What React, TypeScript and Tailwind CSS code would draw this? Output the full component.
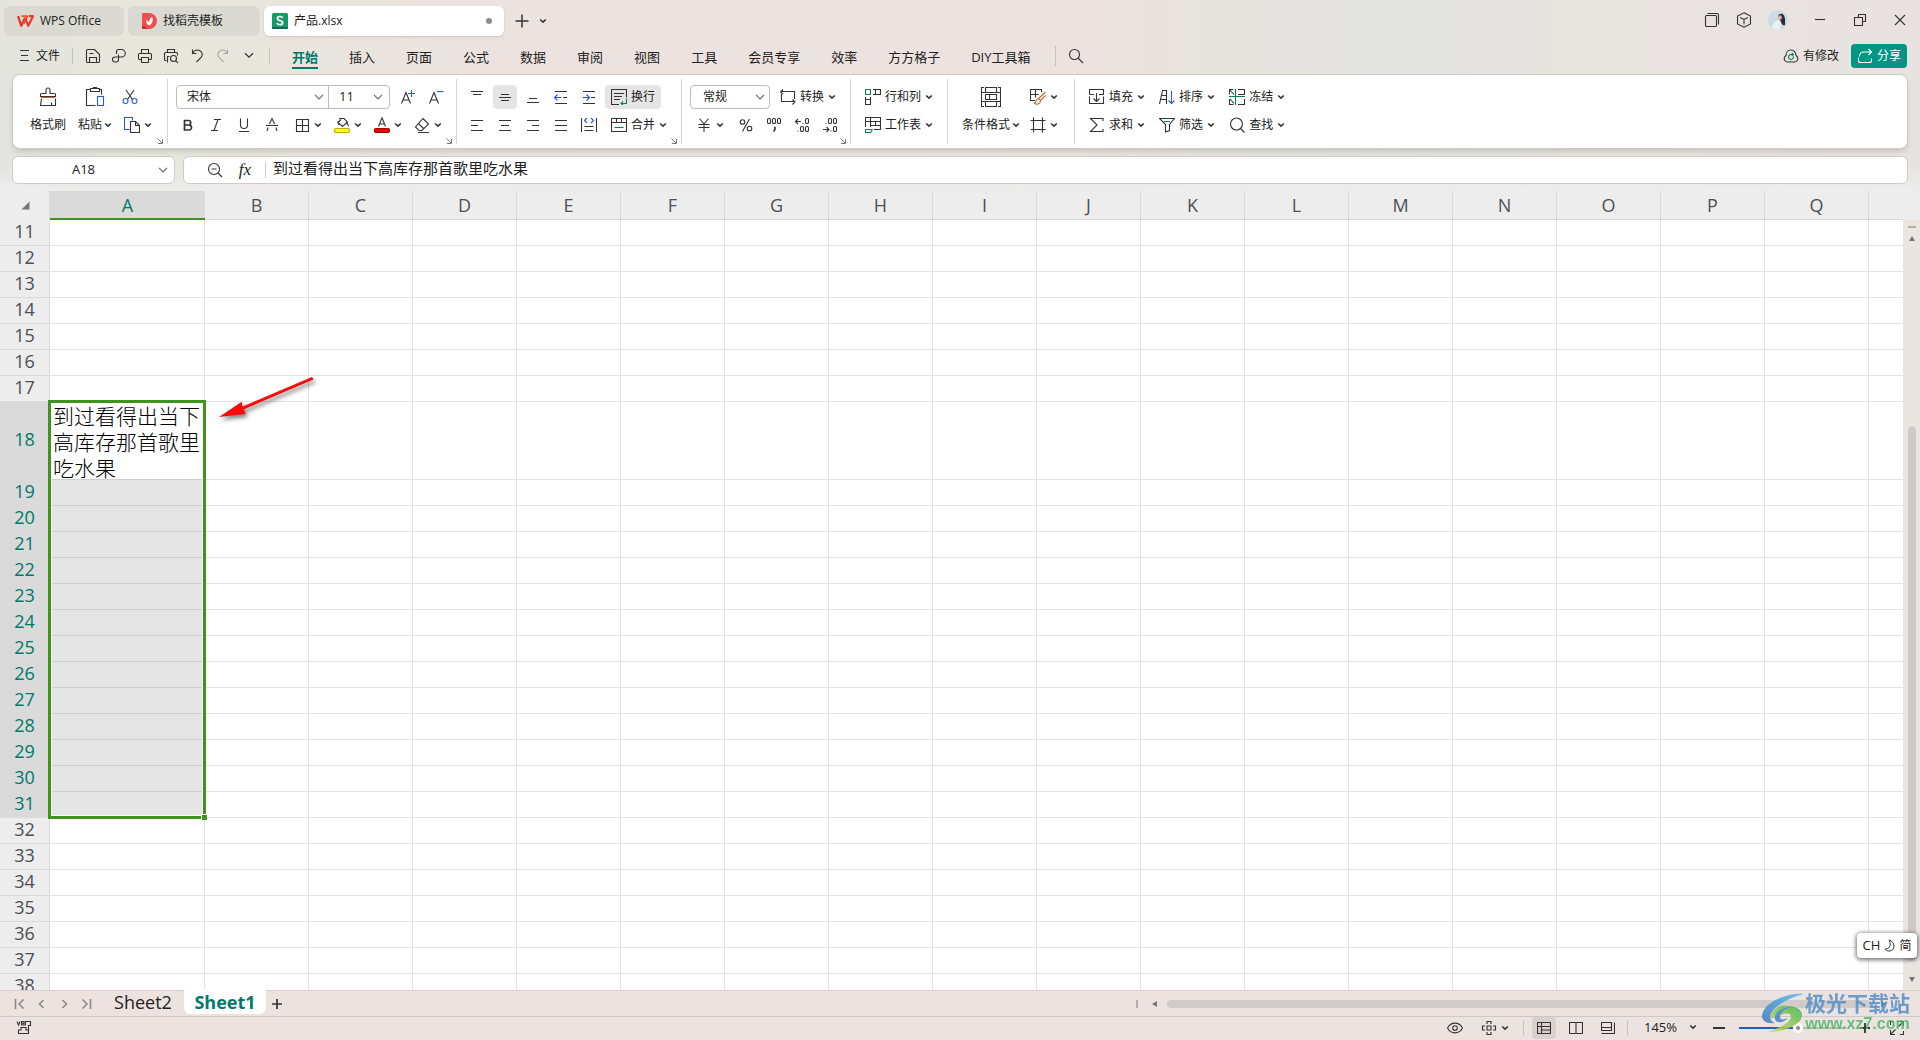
import type { ReactNode } from "react";

const INK = "#333333";
const BLUE = "#2b59d9";
const GREEN = "#0a8058";
const ORANGE = "#c8642c";

const MENUS = [
  "开始",
  "插入",
  "页面",
  "公式",
  "数据",
  "审阅",
  "视图",
  "工具",
  "会员专享",
  "效率",
  "方方格子",
  "DIY工具箱",
];

const COLUMNS = "ABCDEFGHIJKLMNOPQ".split("");
const ROWS = Array.from({ length: 28 }, (_, i) => i + 11);
const CELL_TEXT = "到过看得出当下高库存那首歌里吃水果";

type IconProps = { children: ReactNode; size?: number; className?: string };

function Icon({ children, size = 16, className = "" }: IconProps) {
  return (
    <svg
      width={size}
      height={size}
      viewBox={`0 0 ${size} ${size}`}
      fill="none"
      stroke={INK}
      strokeWidth="1.1"
      className={`shrink-0 ${className}`}
      aria-hidden="true"
    >
      {children}
    </svg>
  );
}

function Chevron() {
  return (
    <svg width="8" height="6" viewBox="0 0 8 6" fill="none" stroke={INK} strokeWidth="1.6" className="shrink-0" aria-hidden="true">
      <path d="M1.2 1.5 4 4.2 6.8 1.5" />
    </svg>
  );
}

function WideChevron({ className = "" }: { className?: string }) {
  return (
    <svg width="10" height="6" viewBox="0 0 10 6" fill="none" stroke="#6b6b6b" strokeWidth="1.2" className={`shrink-0 ${className}`} aria-hidden="true">
      <path d="M1 .8 5 4.8 9 .8" />
    </svg>
  );
}

type ToolProps = { name: string; children: ReactNode; active?: boolean };

function Tool({ name, children, active = false }: ToolProps) {
  return (
    <button
      type="button"
      aria-label={name}
      className={`flex h-6 w-6 items-center justify-center rounded ${active ? "bg-[#e5e5e5]" : ""}`}
    >
      {children}
    </button>
  );
}

function DropTool({ name, children }: ToolProps) {
  return (
    <button type="button" aria-label={name} className="flex h-6 w-9 items-center gap-1 pl-1.5">
      {children}
      <Chevron />
    </button>
  );
}

type LabelToolProps = { icon: ReactNode; label: string; drop?: boolean; active?: boolean };

function LabelTool({ icon, label, drop = true, active = false }: LabelToolProps) {
  return (
    <button
      type="button"
      className={`flex h-6 items-center gap-1 rounded px-1.5 whitespace-nowrap ${active ? "bg-[#e5e5e5]" : ""}`}
    >
      {icon}
      <span>{label}</span>
      {drop && <Chevron />}
    </button>
  );
}

function BigTool({ icon, label, drop = false }: LabelToolProps) {
  return (
    <button type="button" className="flex flex-col items-center gap-1 px-1.5 whitespace-nowrap">
      <span className="flex h-6 items-center">{icon}</span>
      <span className="flex h-6 items-center gap-0.5">
        {label}
        {drop && <Chevron />}
      </span>
    </button>
  );
}

type GroupProps = { children: ReactNode; launcher?: string; last?: boolean };

function Group({ children, launcher, last = false }: GroupProps) {
  return (
    <div className={`relative flex h-[65px] px-2 pt-1.5 ${last ? "" : "border-r border-[#d4d4d4]"}`}>
      {children}
      {launcher && (
        <button type="button" aria-label={launcher} className="absolute right-1 bottom-0">
          <svg width="6" height="6" viewBox="0 0 6 6" fill="none" stroke="#777" className="block">
            <path d="M.5 .5 5 5M5.5 1v4.5H1" />
          </svg>
        </button>
      )}
    </div>
  );
}

function QuickAccess() {
  return (
    <div className="flex items-center gap-2.5">
      <button type="button" aria-label="保存">
        <Icon>
          <path d="M1.5 2.5a1 1 0 0 1 1-1h7l5 5v7a1 1 0 0 1-1 1h-11a1 1 0 0 1-1-1zM4.500 14.500v-5h7v5M4.500 5.500h4" />
        </Icon>
      </button>
      <button type="button" aria-label="输出">
        <Icon>
          <path d="M5.500 6V3.500a2 2 0 0 1 2-2h3a3.500 3.500 0 0 1 0 7.500H4a2.500 2.500 0 0 0 0 5h1a2.500 2.500 0 0 0 2.500-2.500V6.500" />
        </Icon>
      </button>
      <button type="button" aria-label="打印">
        <Icon>
          <path d="M4.500 5.500v-4h7v4M4.500 11.500h-2a1 1 0 0 1-1-1v-4a1 1 0 0 1 1-1h11a1 1 0 0 1 1 1v4a1 1 0 0 1-1 1h-2M4.500 9.500h7v5h-7z" />
        </Icon>
      </button>
      <button type="button" aria-label="打印预览">
        <Icon>
          <path d="M4.500 4.500v-3h7v3M3.500 12.500h-1a1 1 0 0 1-1-1v-6a1 1 0 0 1 1-1h11a1 1 0 0 1 1 1v2M4.500 14.500v-6h2" />
          <circle cx="10.500" cy="10.500" r="3" />
          <path d="m12.700 12.700 2.500 2.500" />
        </Icon>
      </button>
      <button type="button" aria-label="撤销">
        <Icon>
          <path d="M3.500 1.500v4h4M3.500 5.500C5 2.500 8 1.500 10.500 2.500c3 1.500 3.500 4.500 1.500 7L7.500 14" />
        </Icon>
      </button>
      <button type="button" aria-label="恢复" className="opacity-35">
        <Icon>
          <path d="M12.500 1.500v4h-4M12.500 5.500C11 2.500 8 1.500 5.500 2.500c-3 1.500-3.500 4.500-1.500 7L8.500 14" />
        </Icon>
      </button>
      <button type="button" aria-label="更多" className="flex w-4 justify-center">
        <svg width="10" height="7" viewBox="0 0 10 7" fill="none" stroke={INK} strokeWidth="1.300">
          <path d="m1 1.200 4 4 4-4" />
        </svg>
      </button>
    </div>
  );
}

function TitleBar() {
  return (
    <header className="flex h-10 items-start pt-1.5 pl-1">
      <button type="button" className="flex h-[30px] w-30 items-center gap-1.5 rounded-md bg-[#dadad2] pl-[13px]">
        <svg width="17" height="12" viewBox="0 0 17 12" fill="none" strokeWidth="2.200" strokeLinejoin="round">
          <path d="M1 1.200 4.300 10.800 8 2.800" stroke="#e8332a" />
          <path d="M4.500 1.200h6L7 8.500" stroke="#f4511e" strokeWidth="1.800" />
          <path d="M8 3 11.300 10.800 16 1.200h-4" stroke="#ee3b2b" />
        </svg>
        WPS Office
      </button>
      <button type="button" className="ml-1 flex h-[30px] w-33 items-center gap-1.5 rounded-md bg-[#dadad2] pl-3.5">
        <svg width="15" height="16" viewBox="0 0 15 16">
          <path d="M0 1a1 1 0 0 1 1-1h6a8 8 0 0 1 0 16H1a1 1 0 0 1-1-1z" fill="#f04f50" />
          <path d="M0 13h3l2 3H1a1 1 0 0 1-1-1z" fill="#c62f39" />
          <path d="M7.200 12.500C4.800 11.500 4 9.500 4.200 7c1.600.5 2.600 1.500 3 3 0-2.500.5-4.500 2.800-6.500 1.400 3.500.6 7.500-2.800 9z" fill="#fff" />
        </svg>
        找稻壳模板
      </button>
      <div className="ml-1 flex h-[30px] w-60 items-center rounded-md bg-white px-2 shadow-sm">
        <svg width="16" height="16" viewBox="0 0 16 16" aria-hidden="true">
          <rect width="16" height="16" rx="1.500" fill="#149b67" />
          <path d="M0 14h16v.5a1.500 1.500 0 0 1-1.500 1.500h-13A1.500 1.500 0 0 1 0 14.500z" fill="#0b7049" />
          <path d="M10.700 5C10.200 3.900 9.200 3.500 8 3.500c-1.500 0-2.600.7-2.600 2C5.400 8.300 10.700 7 10.700 9.700c0 1.400-1.200 2-2.700 2s-2.600-.6-3-1.800" fill="none" stroke="#fff" strokeWidth="1.700" />
        </svg>
        <span className="ml-1.5">产品.xlsx</span>
        <span className="ml-auto mr-1 h-1.5 w-1.5 rounded-full bg-[#8c8c8c]" />
      </div>
      <div className="flex h-[30px] items-center gap-2.5 pl-[11px]">
        <button type="button" aria-label="新建">
          <Icon size={14}>
            <path d="M7 .5v13M.5 7h13" strokeWidth="1.500" />
          </Icon>
        </button>
        <button type="button" aria-label="标签列表">
          <Chevron />
        </button>
      </div>
      <div className="ml-auto flex h-7 items-center pr-3">
        <button type="button" aria-label="工作区" className="mr-4">
          <Icon>
            <rect x="1.500" y="3.500" width="11" height="11" rx="1" />
            <path d="M3.500 1.500h9.500a1.500 1.500 0 0 1 1.500 1.500v9.500" />
          </Icon>
        </button>
        <button type="button" aria-label="应用" className="mr-4">
          <Icon>
            <path d="M8 .8 14.500 4v8L8 15.200 1.500 12V4zM4 5.500l4 2 4-2M8 7.500v5" />
          </Icon>
        </button>
        <button type="button" aria-label="账号" className="mr-6">
          <svg width="20" height="20" viewBox="0 0 20 20">
            <circle cx="10" cy="10" r="10" fill="#cddbe3" />
            <path d="M10 6c1-2.500 4.500-3 6-.500 1.500 3 1.200 7.500 1 9.500-2 1-3.500-1-4-3.500L11 9z" fill="#2d2b35" />
            <ellipse cx="12" cy="7.500" rx="1.800" ry="2.300" fill="#dcb9b0" />
            <path d="M4 17c1-4 4-7 7-7 2 2 2 6 1 9.500-3 .8-6 0-8-2.500z" fill="#e9f1f4" />
          </svg>
        </button>
        <button type="button" aria-label="最小化" className="mr-6">
          <Icon>
            <path d="M3 7.500h10" />
          </Icon>
        </button>
        <button type="button" aria-label="还原" className="mr-6">
          <Icon>
            <path d="M2.500 5.500h8v8h-8zM6.500 5.500v-3h7v7h-3" />
          </Icon>
        </button>
        <button type="button" aria-label="关闭">
          <Icon>
            <path d="m3 3 10 10M13 3 3 13" />
          </Icon>
        </button>
      </div>
    </header>
  );
}

function MenuBar() {
  return (
    <nav className="mb-[3px] flex h-[31px] items-center pr-[13px] pl-5">
      <button type="button" className="flex items-center gap-[7px]">
        <svg width="9" height="11" viewBox="0 0 9 11" stroke={INK} strokeWidth="1">
          <path d="M0 .5h9M1 5.500h7M0 10.500h9" />
        </svg>
        文件
      </button>
      <span className="mr-3 ml-3 h-4 w-px bg-[#c6c4bf]" />
      <QuickAccess />
      <span className="mr-[22px] ml-3 h-4 w-px bg-[#c6c4bf]" />
      <div className="flex gap-[31px] text-[13px]">
        {MENUS.map((menu) => (
          <button
            key={menu}
            type="button"
            className={
              menu === "开始"
                ? "border-b-2 border-[#00796b] pt-1 leading-5 font-bold whitespace-nowrap text-[#00796b]"
                : "border-b-2 border-transparent pt-1 leading-5 whitespace-nowrap"
            }
          >
            {menu}
          </button>
        ))}
      </div>
      <span className="mr-3 ml-6 h-5 w-px bg-[#c6c4bf]" />
      <button type="button" aria-label="搜索">
        <Icon>
          <circle cx="6.500" cy="6.500" r="5" />
          <path d="m10 10 5 5" />
        </Icon>
      </button>
      <button type="button" className="ml-auto flex items-center gap-1">
        <Icon>
          <path d="M4 14a3.500 3.500 0 0 1-1-6.500C3 4.500 5 2 8 2s5 2.500 5 5.500A3.500 3.500 0 0 1 12 14z" />
          <path d="M10.500 8.500A2.500 2.500 0 1 1 8.500 6.500h1.500M8.800 5l1.500 1.500-1.500 1.500" stroke={GREEN} />
        </Icon>
        有修改
      </button>
      <button type="button" className="ml-3 flex h-6 w-14 items-center gap-1 rounded bg-[#009683] pl-1.5 text-white">
        <svg width="16" height="16" viewBox="0 0 16 16" fill="none" stroke="#fff" strokeWidth="1.100">
          <path d="M1.500 9.500v3a2 2 0 0 0 2 2h9a2 2 0 0 0 2-2v-2M2.500 8.500c0-3 2-4.500 5-4.500h7M11.500 1l3 3-3 3" />
        </svg>
        分享
      </button>
    </nav>
  );
}

function Ribbon() {
  return (
    <div className="mr-3 ml-3 flex rounded-lg border border-[#cfcbc6] bg-white py-1 shadow-md">
      <div className="pl-[3px]">
        <Group launcher="剪贴板">
          <BigTool
            label="格式刷"
            icon={
              <Icon size={20}>
                <path d="M8 6.500V3a2 2 0 0 1 4 0v3.500h4.500a1 1 0 0 1 1 1v2h-15v-2a1 1 0 0 1 1-1zM3.500 11.500l-1 7h15v-7M13.500 18.500v-3" />
                <path d="M3 10.500h14" stroke={ORANGE} />
              </Icon>
            }
          />
          <BigTool
            label="粘贴"
            drop
            icon={
              <Icon size={20}>
                <path d="M5.500 2.500h-4v16h9M14.500 2.500h2v5M5.500 1.500h9v3h-9zM8.500 1.500v-1h3v1" />
                <rect x="12.500" y="9.500" width="6" height="9" stroke={BLUE} />
              </Icon>
            }
          />
          <div className="mr-px flex flex-col gap-1">
            <button type="button" aria-label="剪切" className="flex h-6 items-center pl-1">
              <Icon>
                <path d="M4 1l6.500 9.500M12 1 5.500 10.500" />
                <circle cx="3.500" cy="12" r="2.500" stroke={BLUE} />
                <circle cx="12.500" cy="12" r="2.500" stroke={BLUE} />
              </Icon>
            </button>
            <button type="button" aria-label="复制" className="flex h-6 w-10 items-center gap-1 pl-1.5">
              <Icon>
                <path d="M5.500 12.500h-5v-12h8v3" stroke={BLUE} />
                <path d="M6.500 4.500h5l4 4v7h-9zM11.500 4.500v4h4" />
              </Icon>
              <Chevron />
            </button>
          </div>
        </Group>
      </div>

      <Group launcher="字体设置">
        <div className="flex flex-col gap-1">
          <div className="flex gap-1">
            <div className="mr-0.5 flex h-6 rounded border border-[#bdbdbd]">
              <div className="relative flex items-center border-r border-[#bdbdbd]">
                <select aria-label="字体" className="w-[151px] appearance-none pl-2.5 outline-none">
                  <option>宋体</option>
                </select>
                <WideChevron className="pointer-events-none absolute right-1" />
              </div>
              <div className="relative flex items-center">
                <select aria-label="字号" className="w-15 appearance-none pl-2.5 text-[13px] outline-none">
                  <option>11</option>
                </select>
                <WideChevron className="pointer-events-none absolute right-1.5" />
              </div>
            </div>
            <Tool name="增大字号">
              <Icon>
                <path d="M1.500 14.500 6 3.500l4.500 11M3 11h6" />
                <path d="M11.500 1v7M8 4.500h7" stroke={BLUE} />
              </Icon>
            </Tool>
            <Tool name="减小字号">
              <Icon>
                <path d="M1.500 14.500 6 3.500l4.500 11M3 11h6" />
                <path d="M9 2.500h6.500" stroke={BLUE} />
              </Icon>
            </Tool>
          </div>
          <div className="flex gap-1">
            <Tool name="加粗">
              <Icon>
                <path d="M4.500 3.500h4a2.200 2.200 0 0 1 0 4.500h-4zM4.500 8H9a2.500 2.500 0 0 1 0 5H4.500z" strokeWidth="1.700" />
              </Icon>
            </Tool>
            <Tool name="倾斜">
              <Icon>
                <path d="M6 2.500h7M3 13.500h7M10 2.500l-4 11" />
              </Icon>
            </Tool>
            <Tool name="下划线">
              <Icon>
                <path d="M4.500 1.500v6.500a3.500 3.500 0 0 0 7 0V1.500M3 14.500h10" />
              </Icon>
            </Tool>
            <Tool name="删除线">
              <Icon>
                <path d="M2 8.500h12M5.500 7 8 1.500 10.500 7M4 10.500 3 14M12 10.500l1 3.500" />
              </Icon>
            </Tool>
            <DropTool name="边框">
              <Icon>
                <path d="M2.500 2.500h12v12h-12zM8.500 2.500v12M2.500 8.500h12" />
              </Icon>
            </DropTool>
            <DropTool name="填充颜色">
              <Icon>
                <path d="M5 1.500h5l3.500 3.500-5 4.500L4 5.500l3-3M3.500 4.500 5 8M13 6l1.500 3" />
                <rect x=".5" y="11.500" width="15" height="4" rx="1.500" fill="#ffff00" stroke="#b9b400" />
              </Icon>
            </DropTool>
            <DropTool name="字体颜色">
              <Icon>
                <path d="M4.500 9.500 8 .8l3.500 8.700M5.500 7h5" />
                <rect x=".5" y="11.500" width="15" height="4" rx="1.500" fill="#f00000" stroke="#b30000" />
              </Icon>
            </DropTool>
            <DropTool name="清除">
              <Icon>
                <path d="M9 1.500 14.500 7 8 13.500H5L1.500 10zM4.500 6.500l5.500 5.500M4 15.500h11" />
              </Icon>
            </DropTool>
          </div>
        </div>
      </Group>

      <Group launcher="对齐设置">
        <div className="flex flex-col gap-1">
          <div className="flex gap-1">
            <Tool name="顶端对齐">
              <Icon>
                <path d="M2 2.500h12M4 5.500h8" />
              </Icon>
            </Tool>
            <Tool name="垂直居中" active>
              <Icon>
                <path d="M4 5.500h8M2 8.500h12M4 11.500h8" />
              </Icon>
            </Tool>
            <Tool name="底端对齐">
              <Icon>
                <path d="M4 9.500h8M2 13.500h12" />
              </Icon>
            </Tool>
            <Tool name="减少缩进">
              <Icon>
                <path d="M2 2.500h12M10 8.500h4M2 14.500h12" />
                <path d="M8.500 8.500H1.500M4.500 5.500l-3 3 3 3" stroke={BLUE} />
              </Icon>
            </Tool>
            <Tool name="增加缩进">
              <Icon>
                <path d="M2 2.500h12M10 8.500h4M2 14.500h12" />
                <path d="M1.500 8.500h7M5.500 5.500l3 3-3 3" stroke={BLUE} />
              </Icon>
            </Tool>
            <LabelTool
              label="换行"
              drop={false}
              active
              icon={
                <Icon>
                  <path d="M8 15.500H.5V.5h15v8M3 4.500h10M3 7.500h8M3 10.500h6" />
                  <path d="M15.500 9.500v5h-5M12 12.500l-2 2 2 1.500" stroke={GREEN} />
                </Icon>
              }
            />
          </div>
          <div className="flex gap-1">
            <Tool name="左对齐">
              <Icon>
                <path d="M2 3.500h12M2 8.500h7M2 13.500h12" />
              </Icon>
            </Tool>
            <Tool name="水平居中">
              <Icon>
                <path d="M2 3.500h12M4 8.500h8M2 13.500h12" />
              </Icon>
            </Tool>
            <Tool name="右对齐">
              <Icon>
                <path d="M2 3.500h12M7 8.500h7M2 13.500h12" />
              </Icon>
            </Tool>
            <Tool name="两端对齐">
              <Icon>
                <path d="M2 3.500h12M2 8.500h12M2 13.500h12" />
              </Icon>
            </Tool>
            <Tool name="分散对齐">
              <Icon>
                <path d="M.5 1v14M15.500 1v14M3.500 9.500h9M3.500 13.500h9" />
                <path d="M6 1 3.500 3.500 6 6M10 1l2.500 2.500L10 6" stroke={BLUE} />
              </Icon>
            </Tool>
            <LabelTool
              label="合并"
              icon={
                <Icon>
                  <path d="M.5 1.500h15v13H.5zM.5 5.500h15M5.500 1.500v4M10.500 1.500v4" />
                  <path d="M3.500 10.500h9" stroke={GREEN} />
                </Icon>
              }
            />
          </div>
        </div>
      </Group>

      <Group launcher="数字格式">
        <div className="flex flex-col gap-1">
          <div className="flex gap-1">
            <div className="relative flex h-6 items-center rounded border border-[#bdbdbd]">
              <select aria-label="数字格式" className="w-[78px] appearance-none pl-3 outline-none">
                <option>常规</option>
              </select>
              <WideChevron className="pointer-events-none absolute right-1" />
            </div>
            <LabelTool
              label="转换"
              icon={
                <Icon>
                  <path d="M1.500 5v7.500H11M3 .5l-2.500 2.500L3 5M.5 2.500H14.500V10M12.500 10.500l2.500 2.500-2.500 2.500M11 12.500h4" />
                </Icon>
              }
            />
          </div>
          <div className="flex gap-1">
            <button type="button" aria-label="货币" className="flex h-6 w-10 items-center gap-1 pl-1.5">
              <Icon>
                <path d="M3.500 1.500 8 7l4.500-5.500M2.500 7.500h11M2.500 10.500h11M8 7v8" />
              </Icon>
              <Chevron />
            </button>
            <Tool name="百分比">
              <Icon>
                <circle cx="4.500" cy="5" r="2.300" />
                <circle cx="11.500" cy="11.500" r="2.300" />
                <path d="M11.500 2 4.500 14.500" />
              </Icon>
            </Tool>
            <Tool name="千位分隔">
              <Icon>
                <rect x="1.500" y="1.500" width="3" height="5" rx="1.300" />
                <rect x="6.500" y="1.500" width="3" height="5" rx="1.300" />
                <rect x="11.500" y="1.500" width="3" height="5" rx="1.300" />
                <path d="M8 10.500h1v2l-1.500 2" strokeWidth="1.500" />
              </Icon>
            </Tool>
            <Tool name="增加小数位">
              <Icon>
                <path d="M7 4.500H1.500M4 2 1.500 4.500 4 7M8.500 6.500h1M3.500 14h1" />
                <rect x="11.500" y="1.500" width="3" height="5" rx="1.300" />
                <rect x="6.500" y="9.500" width="3" height="5" rx="1.300" />
                <rect x="11.500" y="9.500" width="3" height="5" rx="1.300" />
              </Icon>
            </Tool>
            <Tool name="减少小数位">
              <Icon>
                <path d="M1 12.500h6M4.500 10 7 12.500 4.500 15M3.500 6.500h1M8.500 14h1" />
                <rect x="6.500" y="1.500" width="3" height="5" rx="1.300" />
                <rect x="11.500" y="1.500" width="3" height="5" rx="1.300" />
                <rect x="11.500" y="9.500" width="3" height="5" rx="1.300" />
              </Icon>
            </Tool>
          </div>
        </div>
      </Group>

      <Group>
        <div className="flex flex-col gap-1">
          <LabelTool
            label="行和列"
            icon={
              <Icon>
                <path d="M.5 .5h5v5h-5z" stroke={GREEN} />
                <path d="M8 .5h7.500v5H8M10.500 .5v5M.5 8v7.500h5V8M.5 10.500h5" />
              </Icon>
            }
          />
          <LabelTool
            label="工作表"
            icon={
              <Icon>
                <path d="M.5 10V.5h15v12H9M.5 4.500h15M5.500 .5V10M5.500 8.500h10M10.500 4.500v4" />
                <path d="M.5 12.500h7M.5 12.500v3h5l2-3" stroke={GREEN} />
              </Icon>
            }
          />
        </div>
      </Group>

      <Group>
        <BigTool
          label="条件格式"
          drop
          icon={
            <Icon size={20}>
              <path d="M3 .5H.5v19H3M17 .5h2.500v19H17M4.500 .5h11v5h-11zM4.500 14.500h11v5h-11zM4.500 7.500h4v5h-4zM8.500 7.500h7v5h-7M.5 5.500h4M15.500 5.500h4M.5 14.500h4M15.500 14.500h4" />
            </Icon>
          }
        />
        <div className="flex flex-col gap-1">
          <button type="button" aria-label="单元格样式" className="flex h-6 w-10 items-center gap-1 pl-1">
            <Icon>
              <path d="M5 11.500H.5V.5h11V3M.5 5.500h8M5.500 .5v8" />
              <path d="m15.500 3-7 6.500 2 2 5-5M8.500 9.500c-3 .5-2 3-4 5 3 1.500 6 0 6-3" stroke={ORANGE} />
            </Icon>
            <Chevron />
          </button>
          <button type="button" aria-label="单元格" className="flex h-6 w-10 items-center gap-1 pl-1">
            <Icon>
              <path d="M3.500 .5v15M12.500 .5v15M.5 3.500h15M.5 12.500h15" />
            </Icon>
            <Chevron />
          </button>
        </div>
      </Group>

      <Group last>
        <div className="grid grid-cols-3 content-start gap-x-0.5 gap-y-1">
          <LabelTool
            label="填充"
            icon={
              <Icon>
                <path d="M.5 5.500v-5h14v5H10M.5 5.500H5M.5 7.500v7h14v-7M7.500 4v8M4.500 9.500l3 3 3-3" />
              </Icon>
            }
          />
          <LabelTool
            label="排序"
            icon={
              <Icon>
                <path d="M.5 15 3.500 1.500h4V15M2 10.500h5.500M3 6.500h4.500" />
                <path d="M12.500 2v12.500M9.500 11.500l3 3 3-3" stroke={BLUE} />
              </Icon>
            }
          />
          <LabelTool
            label="冻结"
            icon={
              <Icon>
                <path d="M4.500 .5h-4v5M9 .5h6.500v5H9M.5 10v5.500h4M9 15.500h6.500V10M1 1l4 4.500M1 10l4 4.500" />
                <path d="M6.500 0v16M0 7.500h16" stroke={GREEN} />
              </Icon>
            }
          />
          <LabelTool
            label="求和"
            icon={
              <Icon>
                <path d="M14 4V1.500H1.500L8 8l-6.500 6.500H14V12" />
              </Icon>
            }
          />
          <LabelTool
            label="筛选"
            icon={
              <Icon>
                <path d="M.5 1.500h15l-5 6v6l-4 1.500V7.500z" />
                <path d="M5 4.500h6" stroke={GREEN} />
              </Icon>
            }
          />
          <LabelTool
            label="查找"
            icon={
              <Icon>
                <circle cx="7.500" cy="7" r="6" />
                <path d="m11.500 11.500 4 4" />
              </Icon>
            }
          />
        </div>
      </Group>
    </div>
  );
}

function FormulaBar() {
  return (
    <div className="flex h-[42px] gap-2 bg-linear-to-b from-transparent from-40% to-[#ededed] px-3 py-[7px]">
      <div className="flex w-[163px] items-center rounded-md border border-[#cfccc8] bg-white pr-1.5">
        <input
          aria-label="名称框"
          defaultValue="A18"
          className="w-full min-w-0 flex-1 pr-1 text-center text-[13px] outline-none"
        />
        <button type="button" aria-label="名称列表">
          <WideChevron />
        </button>
      </div>
      <div className="flex flex-1 items-center rounded-md border border-[#cfccc8] bg-white pl-[23px]">
        <button type="button" aria-label="浏览公式结果">
          <Icon>
            <circle cx="7" cy="7" r="5.500" />
            <path d="m11 11 4 4M4.500 7h5" />
          </Icon>
        </button>
        <button type="button" aria-label="插入函数" className="ml-3 w-5 font-['Liberation_Serif',serif] text-[17px] leading-5 italic">
          fx
        </button>
        <span className="mr-[7px] ml-2.5 h-4 w-px bg-[#cccccc]" />
        <input
          aria-label="编辑栏"
          defaultValue={CELL_TEXT}
          className="mb-1 flex-1 text-[15px] text-[#222] outline-none"
        />
      </div>
    </div>
  );
}

function VerticalScroll() {
  return (
    <div className="mt-[29px] flex w-[17px] flex-col items-center bg-[#ebe4e1] pt-1.5">
      <span className="h-0.5 w-2 bg-[#b3adaa]" />
      <svg width="6" height="5" viewBox="0 0 6 5" fill="#777" className="mt-2">
        <path d="M3 0 6 5H0z" />
      </svg>
      <span className="flex-[183]" />
      <span className="w-2 flex-[529] rounded bg-[#d0cbc8]" />
      <span className="flex-[16]" />
      <svg width="6" height="5" viewBox="0 0 6 5" fill="#777" className="mb-2">
        <path d="M0 0h6L3 5z" />
      </svg>
    </div>
  );
}

function isSelected(row: number) {
  return row >= 18 && row <= 31;
}

function Sheet() {
  return (
    <main className="relative flex min-h-0 flex-1 bg-[#ededed]">
      <div className="min-w-0 flex-1 overflow-hidden">
        <table className="w-full table-fixed border-separate border-spacing-0 bg-white text-lg font-normal text-[#4f4f55]">
          <colgroup>
            <col className="w-[50px]" />
            <col className="w-[155px]" />
            {COLUMNS.slice(1).map((column) => (
              <col key={column} className="w-[104px]" />
            ))}
            <col />
          </colgroup>
          <thead>
            <tr className="h-[29px] bg-[#ededed]">
              <th className="border-r border-[#dadada] p-0">
                <svg width="9" height="9" viewBox="0 0 9 9" className="ml-[21px]">
                  <path d="M8.500 .5v8H.5z" fill="#777" />
                </svg>
              </th>
              {COLUMNS.map((column) => (
                <th
                  key={column}
                  className={
                    column === "A"
                      ? "border-b-2 border-[#3f9420] bg-[#dadada] p-0 leading-[26px] font-normal text-[#00796b]"
                      : "border-r border-b border-[#d8d8d8] p-0 leading-[28px] font-normal"
                  }
                >
                  {column}
                </th>
              ))}
              <th className="border-b border-[#d8d8d8] p-0" />
            </tr>
          </thead>
          <tbody>
            {ROWS.map((row) => (
              <tr key={row} className={row === 18 ? "h-[78px]" : "h-[26px]"}>
                <th
                  className={
                    isSelected(row)
                      ? "border-r border-[#dadada] bg-[#dadada] p-0 pb-[3px] leading-[23px] font-normal text-[#00796b]"
                      : "border-r border-b border-[#dadada] bg-[#ededed] p-0 pb-0.5 leading-[23px] font-normal"
                  }
                >
                  {row}
                </th>
                {COLUMNS.map((column) => {
                  if (column !== "A") {
                    return <td key={column} className="border-r border-b border-[#e3e3e3] p-0" />;
                  }
                  if (row === 18) {
                    return (
                      <td key={column} className="relative border-r border-b border-[#cfcfcf] p-0 pl-[3px] text-left align-top">
                        <p className="h-[77px] font-['Noto_Sans_CJK_SC',sans-serif] text-[21px] leading-[26px] font-light text-black">
                          {CELL_TEXT}
                        </p>
                        <span className="pointer-events-none absolute -top-0.5 -left-0.5 h-[419px] w-[158px] border-3 border-[#3f9420] shadow-[inset_0_0_0_1px_white]">
                          <span className="absolute -right-[4px] -bottom-[4px] h-1.5 w-1.5 border-t border-l border-white bg-[#3f9420]" />
                        </span>
                      </td>
                    );
                  }
                  return (
                    <td
                      key={column}
                      className={
                        isSelected(row)
                          ? "border-r border-b border-[#cfcfcf] bg-[#e5e5e5] p-0"
                          : "border-r border-b border-[#e3e3e3] p-0"
                      }
                    />
                  );
                })}
                <td className="border-b border-[#e3e3e3] p-0" />
              </tr>
            ))}
          </tbody>
        </table>
      </div>
      <VerticalScroll />
      <svg
        width="104"
        height="50"
        viewBox="0 0 104 50"
        className="pointer-events-none absolute top-[185px] left-[215px] drop-shadow-[2px_3px_2px_rgba(0,0,0,0.5)]"
        aria-hidden="true"
      >
        <path d="M4 41 26.700 25.700 27.500 30.500 97 1 98.500 3.500 28.500 33.500 30.700 38z" fill="#fb0a0a" />
      </svg>
      <button
        type="button"
        className="absolute right-[3px] bottom-8 flex h-[25px] w-15 items-center justify-center gap-1 rounded bg-white text-[13px] whitespace-nowrap shadow-[0_1px_4px_1px_rgba(0,0,0,0.55)]"
      >
        CH
        <svg width="11" height="13" viewBox="0 0 11 13" fill="none" stroke={INK} aria-hidden="true">
          <path d="M5 1c3 1 5 3 5 6 0 3-2 5-5 5-2 0-3.500-1-4-2 4 0 7-3 4-9z" />
        </svg>
        <span className="text-xs">简</span>
      </button>
    </main>
  );
}

function SheetTabs() {
  return (
    <div className="flex h-[26px] items-center border-t border-[#d3cecb] pl-3">
      <div className="flex items-center gap-1.5">
        <button type="button" aria-label="第一个工作表">
          <Icon className="opacity-50">
            <path d="M3.500 3v10M11.500 3.500 7 8l4.500 4.500" strokeWidth="1.600" />
          </Icon>
        </button>
        <button type="button" aria-label="上一个工作表">
          <Icon className="opacity-50">
            <path d="M9.500 4 5.500 8l4 4" strokeWidth="1.600" />
          </Icon>
        </button>
        <button type="button" aria-label="下一个工作表">
          <Icon className="opacity-50">
            <path d="m6.500 4 4 4-4 4" strokeWidth="1.600" />
          </Icon>
        </button>
        <button type="button" aria-label="最后一个工作表">
          <Icon className="opacity-50">
            <path d="M12.500 3v10M4.500 3.500 9 8l-4.500 4.500" strokeWidth="1.600" />
          </Icon>
        </button>
      </div>
      <button type="button" className="-mt-1 h-6 w-[90px] pl-2 text-center text-lg leading-6">
        Sheet2
      </button>
      <button type="button" className="-mt-1 h-6 w-[82px] rounded-b-md bg-white text-center text-lg leading-6 font-bold text-[#00796b]">
        Sheet1
      </button>
      <button type="button" aria-label="新建工作表" className="ml-1.5">
        <Icon size={10}>
          <path d="M5 0v10M0 5h10" strokeWidth="1.700" />
        </Icon>
      </button>
      <div className="ml-auto flex w-[784px] items-center pr-5">
        <span className="h-2 w-0.5 bg-[#b3adaa]" />
        <svg width="5" height="6" viewBox="0 0 5 6" fill="#777" className="ml-3.5">
          <path d="M0 3 5 0v6z" />
        </svg>
        <span className="mx-2.5 h-2 flex-1 rounded-full bg-[#d0cbc8]" />
        <svg width="5" height="6" viewBox="0 0 5 6" fill="#777" className="mr-3">
          <path d="M5 3 0 0v6z" />
        </svg>
        <span className="h-2 w-0.5 bg-[#b3adaa]" />
      </div>
    </div>
  );
}

function StatusBar() {
  return (
    <footer className="flex h-6 items-center border-t border-[#cfc9c6] pr-4 pb-0.5 pl-4">
      <button type="button" aria-label="宏">
        <Icon>
          <path d="M1 1.500 2.500 5 4 1.500M5.500 1.500v3.500h2.500v-3.500zM5.500 3.300H8M9.500 5.500v-4h5v4h-2v8h-10v-3.500H5V7.500h5V10h2.500" />
        </Icon>
      </button>
      <div className="ml-auto flex items-center">
        <button type="button" aria-label="护眼模式" className="mr-[18px]">
          <Icon>
            <path d="M.5 8C4 1.500 12 1.500 15.500 8 12 14.500 4 14.500.5 8z" />
            <circle cx="8" cy="8" r="2.300" />
          </Icon>
        </button>
        <button type="button" aria-label="阅读模式" className="flex items-center gap-1">
          <Icon>
            <path d="M6 6h4v4H6zM6 4V1.500h4V4M6 12v2.500h4V12M4 6H1.500v4H4M12 6h2.500v4H12" />
          </Icon>
          <Chevron />
        </button>
        <span className="mr-2 ml-3.5 h-4 w-px bg-[#c9c3c0]" />
        <button type="button" aria-label="普通视图" className="flex h-[22px] w-6 items-center justify-center rounded bg-[#d8d1ce]">
          <Icon size={14}>
            <path d="M.5 1.500h13v11H.5zM.5 5.500h13M4.500 1.500v11M4.500 9h9" />
          </Icon>
        </button>
        <button type="button" aria-label="分页预览" className="ml-[13px]">
          <Icon size={14}>
            <path d="M.5 1.500h13v11H.5zM7 1.500v11" />
          </Icon>
        </button>
        <button type="button" aria-label="页面布局" className="ml-[18px]">
          <Icon size={14}>
            <path d="M.5 1.500h10v8H.5zM.5 12.500h13v-11M.5 6.500h10" />
          </Icon>
        </button>
        <span className="mr-4 ml-3 h-4 w-px bg-[#c9c3c0]" />
        <button type="button" className="flex items-center gap-3 text-[13px]">
          145%
          <Chevron />
        </button>
        <button type="button" aria-label="缩小" className="ml-4">
          <Icon size={12}>
            <path d="M0 6h12" strokeWidth="2" />
          </Icon>
        </button>
        <input
          type="range"
          aria-label="显示比例"
          min="0"
          max="100"
          defaultValue="56"
          className="mx-3.5 h-2.5 w-[107px] appearance-none bg-[linear-gradient(to_right,#1f5fc4_56%,#bdb7b4_56%)] bg-size-[100%_2px] bg-center bg-no-repeat [&::-webkit-slider-thumb]:h-2.5 [&::-webkit-slider-thumb]:w-2.5 [&::-webkit-slider-thumb]:appearance-none [&::-webkit-slider-thumb]:rounded-full [&::-webkit-slider-thumb]:border-3 [&::-webkit-slider-thumb]:border-white [&::-webkit-slider-thumb]:bg-[#888]"
        />
        <button type="button" aria-label="放大" className="mr-5">
          <Icon size={10}>
            <path d="M5 0v10M0 5h10" strokeWidth="1.800" />
          </Icon>
        </button>
        <button type="button" aria-label="全屏">
          <Icon size={14}>
            <path d="M9 .5h4.500V5M13.500 .5 8.500 5.500M5 13.500H.5V9M.5 13.500l5-5M.5 4V.5H4M13.500 10v3.500H10" />
          </Icon>
        </button>
      </div>
    </footer>
  );
}

function SiteMark() {
  return (
    <div className="pointer-events-none absolute right-2.5 bottom-1.5 flex items-end opacity-85">
      <svg width="44" height="42" viewBox="0 0 44 40" aria-hidden="true">
        <defs>
          <linearGradient id="swirlBlue" x1="0" y1="1" x2="1" y2="0">
            <stop offset="0" stopColor="#3f78bd" />
            <stop offset="1" stopColor="#4fc1ec" />
          </linearGradient>
          <linearGradient id="swirlGreen" x1="0" y1="1" x2="1" y2="0">
            <stop offset="0" stopColor="#d9df4e" />
            <stop offset="1" stopColor="#3fb15a" />
          </linearGradient>
        </defs>
        <path d="M43 1C27-1 3 9 1 22c-.5 6 5 9 13 8-5-2-6-6-3-11C16 11 30 4 43 1z" fill="url(#swirlBlue)" />
        <path d="M20 13c11-1 21 2 21 9 0 10-18 17-34 17 11-4 22-9 23-15 0-4-4-4-8-3-4 2-6 5-12 4 0-6 4-10 10-12z" fill="url(#swirlGreen)" />
        <path d="M14 26c-1-6 4-11 17-12-8 2-12 6-12 10 0 3 4 3 8 1-4 5-12 6-13 1z" fill="#3f86c8" />
      </svg>
      <div className="flex flex-col items-center">
        <span className="font-['Noto_Sans_CJK_SC',sans-serif] text-[21px] leading-6 font-bold text-[#5590cc]">极光下载站</span>
        <span className="font-['Liberation_Sans',sans-serif] text-base leading-5 font-bold text-[#4fb96b]">www.xz7.com</span>
      </div>
    </div>
  );
}

export default function App() {
  return (
    <div className="relative flex h-screen flex-col overflow-hidden bg-[linear-gradient(to_right,#e4e4df_0%,#e7e7db_8%,#ece3e0_25%,#ece2e0_56%,#e7e4df_63%,#e3e4e0_74%,#e8e4e0_82%,#e8e3e0_100%)] font-['Open_Sans','Noto_Sans_CJK_SC',sans-serif] text-xs text-[#222]">
      <TitleBar />
      <MenuBar />
      <Ribbon />
      <FormulaBar />
      <Sheet />
      <div className="bg-[#ece3e0]">
        <SheetTabs />
        <StatusBar />
      </div>
      <SiteMark />
    </div>
  );
}
